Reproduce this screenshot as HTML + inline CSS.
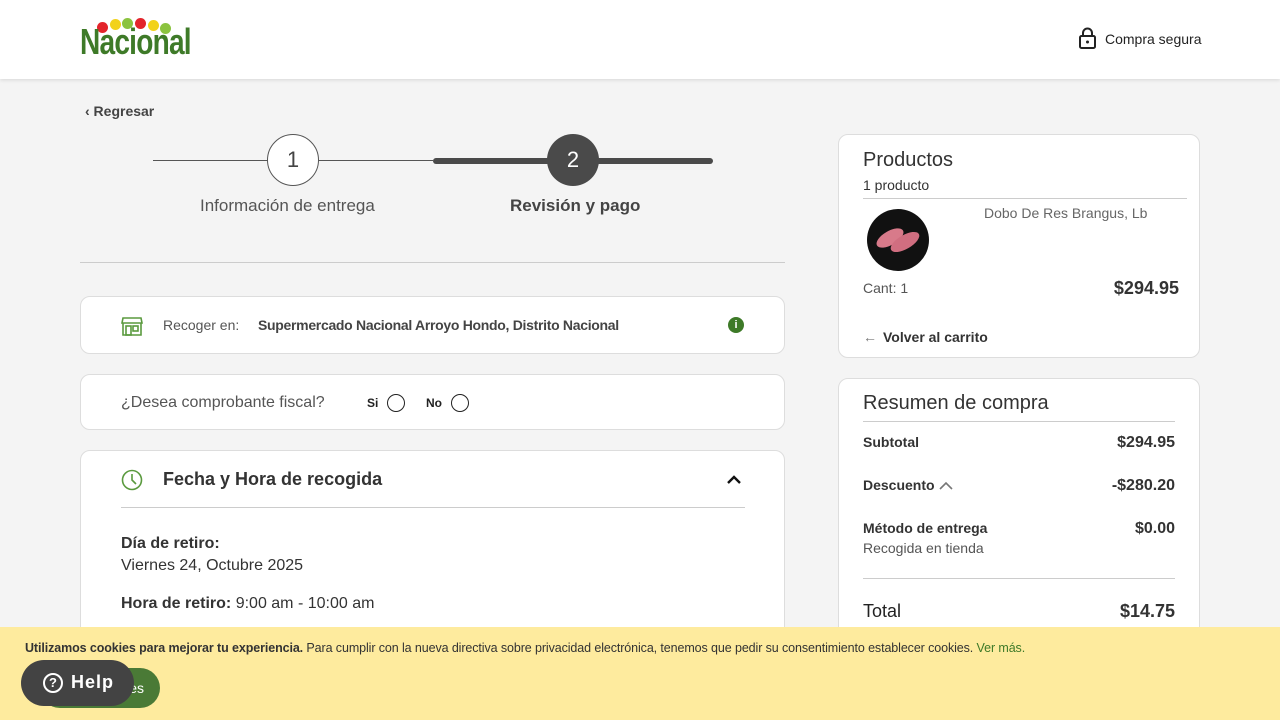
<!DOCTYPE html>
<html><head><meta charset="utf-8"><style>
*{box-sizing:border-box;margin:0;padding:0}
body{width:1280px;height:720px;overflow:hidden;background:#f4f4f4;font-family:"Liberation Sans",sans-serif;color:#333;position:relative}
.hdr{position:absolute;left:0;top:0;width:1280px;height:79px;background:#fff;box-shadow:0 1px 4px rgba(0,0,0,.12)}
.abs{position:absolute}
.card{position:absolute;background:#fff;border:1px solid #ddd;border-radius:10px}
.b{font-weight:bold}
</style></head><body>
<div class="hdr">
 <div class="abs" style="left:80px;top:18px;width:102px;height:42px">
  <span class="abs" style="left:17px;top:4px;width:11px;height:11px;border-radius:50%;background:#e3242b"></span>
  <span class="abs" style="left:30px;top:1px;width:11px;height:11px;border-radius:50%;background:#f2d21a"></span>
  <span class="abs" style="left:42px;top:0px;width:11px;height:11px;border-radius:50%;background:#8bc33f"></span>
  <span class="abs" style="left:55px;top:0px;width:11px;height:11px;border-radius:50%;background:#e3242b"></span>
  <span class="abs" style="left:68px;top:2px;width:11px;height:11px;border-radius:50%;background:#f2d21a"></span>
  <span class="abs" style="left:80px;top:5px;width:11px;height:11px;border-radius:50%;background:#8bc33f"></span>
  <span class="abs b" style="left:0px;top:6px;font-size:36px;line-height:36px;color:#3e7a28;letter-spacing:-1px;transform:scaleX(.78);transform-origin:left">Nacional</span>
 </div>
 <svg class="abs" style="left:1078px;top:27px" width="20" height="22" viewBox="0 0 20 22"><rect x="2" y="9" width="15" height="12" rx="1.5" fill="none" stroke="#222" stroke-width="2"/><path d="M5 9V6a4.5 4.5 0 0 1 9 0v3" fill="none" stroke="#222" stroke-width="2"/><circle cx="9.5" cy="15" r="1.5" fill="#222"/></svg>
 <span class="abs" style="left:1105px;top:31px;font-size:14px;color:#222">Compra segura</span>
</div>
<span class="abs b" style="left:85px;top:103px;font-size:14px;color:#444">‹ Regresar</span>
<div class="abs" style="left:153px;top:160px;width:280px;height:1px;background:#555"></div>
<div class="abs" style="left:433px;top:158px;width:280px;height:6px;background:#4a4a4a;border-radius:3px"></div>
<div class="abs" style="left:267px;top:134px;width:52px;height:52px;border-radius:50%;background:#fff;border:1px solid #555;text-align:center;line-height:50px;font-size:22px;color:#444">1</div>
<div class="abs" style="left:547px;top:134px;width:52px;height:52px;border-radius:50%;background:#4a4a4a;text-align:center;line-height:52px;font-size:22px;color:#fff">2</div>
<span class="abs" style="left:200px;top:196px;font-size:17px;color:#555">Información de entrega</span>
<span class="abs b" style="left:510px;top:196px;font-size:17px;color:#444">Revisión y pago</span>
<div class="abs" style="left:80px;top:262px;width:705px;height:1px;background:#ccc"></div>

<div class="card" style="left:80px;top:296px;width:705px;height:58px">
 <svg class="abs" style="left:40px;top:19px" width="22" height="20" viewBox="0 0 22 20"><path d="M2 2h18l1 5H1z M2 7v12h18V7" fill="none" stroke="#5a9a3e" stroke-width="1.6"/><rect x="5" y="10" width="5" height="9" fill="none" stroke="#5a9a3e" stroke-width="1.6"/><rect x="12" y="10" width="5" height="5" fill="none" stroke="#5a9a3e" stroke-width="1.6"/></svg>
 <span class="abs" style="left:82px;top:20px;font-size:14px;color:#555">Recoger en:</span>
 <span class="abs b" style="left:177px;top:20px;font-size:14px;color:#444;letter-spacing:-0.3px">Supermercado Nacional Arroyo Hondo, Distrito Nacional</span>
 <div class="abs b" style="left:647px;top:20px;width:16px;height:16px;border-radius:50%;background:#3e7a28;color:#fff;font-size:11px;text-align:center;line-height:16px">i</div>
</div>
<div class="card" style="left:80px;top:374px;width:705px;height:56px">
 <span class="abs" style="left:40px;top:19px;font-size:16px;color:#555">¿Desea comprobante fiscal?</span>
 <span class="abs b" style="left:286px;top:21px;font-size:12px;color:#222">Si</span>
 <div class="abs" style="left:306px;top:19px;width:18px;height:18px;border-radius:50%;border:1.5px solid #222"></div>
 <span class="abs b" style="left:345px;top:21px;font-size:12px;color:#222">No</span>
 <div class="abs" style="left:370px;top:19px;width:18px;height:18px;border-radius:50%;border:1.5px solid #222"></div>
</div>
<div class="card" style="left:80px;top:450px;width:705px;height:200px">
 <svg class="abs" style="left:40px;top:18px" width="22" height="22" viewBox="0 0 22 22"><circle cx="11" cy="11" r="9.5" fill="none" stroke="#5a9a3e" stroke-width="1.6"/><path d="M11 5v6l4 4" fill="none" stroke="#5a9a3e" stroke-width="1.6"/></svg>
 <span class="abs b" style="left:82px;top:18px;font-size:18px;color:#333">Fecha y Hora de recogida</span>
 <svg class="abs" style="left:645px;top:22px" width="16" height="12" viewBox="0 0 16 12"><path d="M2 10l6-6 6 6" fill="none" stroke="#111" stroke-width="2.4"/></svg>
 <div class="abs" style="left:40px;top:56px;width:624px;height:1px;background:#ccc"></div>
 <span class="abs b" style="left:40px;top:84px;font-size:16px;color:#333">Día de retiro:</span>
 <span class="abs" style="left:40px;top:106px;font-size:16px;color:#333">Viernes 24, Octubre 2025</span>
 <span class="abs" style="left:40px;top:144px;font-size:16px;color:#333"><b>Hora de retiro:</b> 9:00 am - 10:00 am</span>
</div>

<div class="card" style="left:838px;top:134px;width:362px;height:224px">
 <span class="abs" style="left:24px;top:14px;font-size:20px;color:#333">Productos</span>
 <span class="abs" style="left:24px;top:42px;font-size:14px;color:#333">1 producto</span>
 <div class="abs" style="left:24px;top:63px;width:324px;height:1px;background:#ccc"></div>
 <div class="abs" style="left:28px;top:74px;width:62px;height:62px;border-radius:50%;background:#111;overflow:hidden">
  <div class="abs" style="left:8px;top:22px;width:30px;height:14px;background:#d87a8a;border-radius:50%;transform:rotate(-30deg)"></div>
  <div class="abs" style="left:22px;top:26px;width:32px;height:14px;background:#d06e80;border-radius:50%;transform:rotate(-30deg)"></div>
 </div>
 <span class="abs" style="left:145px;top:70px;font-size:14px;color:#666">Dobo De Res Brangus, Lb</span>
 <span class="abs" style="left:24px;top:145px;font-size:14px;color:#555">Cant: 1</span>
 <span class="abs" style="right:20px;top:143px;font-size:18px;color:#333;font-weight:bold">$294.95</span>
 <span class="abs" style="left:24px;top:194px;font-size:14px;color:#777">←</span>
 <span class="abs b" style="left:44px;top:194px;font-size:14px;color:#333">Volver al carrito</span>
</div>
<div class="card" style="left:838px;top:378px;width:362px;height:270px">
 <span class="abs" style="left:24px;top:13px;font-size:20px;color:#333">Resumen de compra</span>
 <div class="abs" style="left:24px;top:42px;width:312px;height:1px;background:#ccc"></div>
 <span class="abs b" style="left:24px;top:55px;font-size:14px">Subtotal</span>
 <span class="abs b" style="right:24px;top:55px;font-size:16px">$294.95</span>
 <span class="abs b" style="left:24px;top:98px;font-size:14px">Descuento</span>
 <svg class="abs" style="left:100px;top:102px" width="14" height="10" viewBox="0 0 14 10"><path d="M1 8l6-6 6 6" fill="none" stroke="#777" stroke-width="1.6"/></svg>
 <span class="abs b" style="right:24px;top:98px;font-size:16px">-$280.20</span>
 <span class="abs b" style="left:24px;top:141px;font-size:14px">Método de entrega</span>
 <span class="abs" style="left:24px;top:161px;font-size:14px;color:#555">Recogida en tienda</span>
 <span class="abs b" style="right:24px;top:141px;font-size:16px">$0.00</span>
 <div class="abs" style="left:24px;top:199px;width:312px;height:1px;background:#ccc"></div>
 <span class="abs" style="left:24px;top:222px;font-size:18px;color:#222">Total</span>
 <span class="abs b" style="right:24px;top:222px;font-size:18px">$14.75</span>
</div>

<div class="abs" style="left:0;top:627px;width:1280px;height:93px;background:#feeb9e">
 <span class="abs" style="left:25px;top:14px;font-size:12.5px;color:#333;letter-spacing:-0.1px"><b>Utilizamos cookies para mejorar tu experiencia.</b> Para cumplir con la nueva directiva sobre privacidad electrónica, tenemos que pedir su consentimiento establecer cookies. <span style="color:#3e7a28">Ver más.</span></span>
 <div class="abs" style="left:40px;top:41px;width:120px;height:40px;border-radius:20px;background:#4a7a36;color:#fff;font-size:14px;line-height:40px;text-align:right;padding-right:16px">es</div>
 <div class="abs" style="left:21px;top:33px;width:113px;height:46px;border-radius:23px;background:#434343;color:#fff">
  <div class="abs" style="left:22px;top:13px;width:20px;height:20px;border-radius:50%;border:2px solid #fff;text-align:center;font-size:13px;line-height:16px;font-weight:bold">?</div>
  <span class="abs b" style="left:50px;top:12px;font-size:18px;letter-spacing:1px">Help</span>
 </div>
</div>
</body></html>
